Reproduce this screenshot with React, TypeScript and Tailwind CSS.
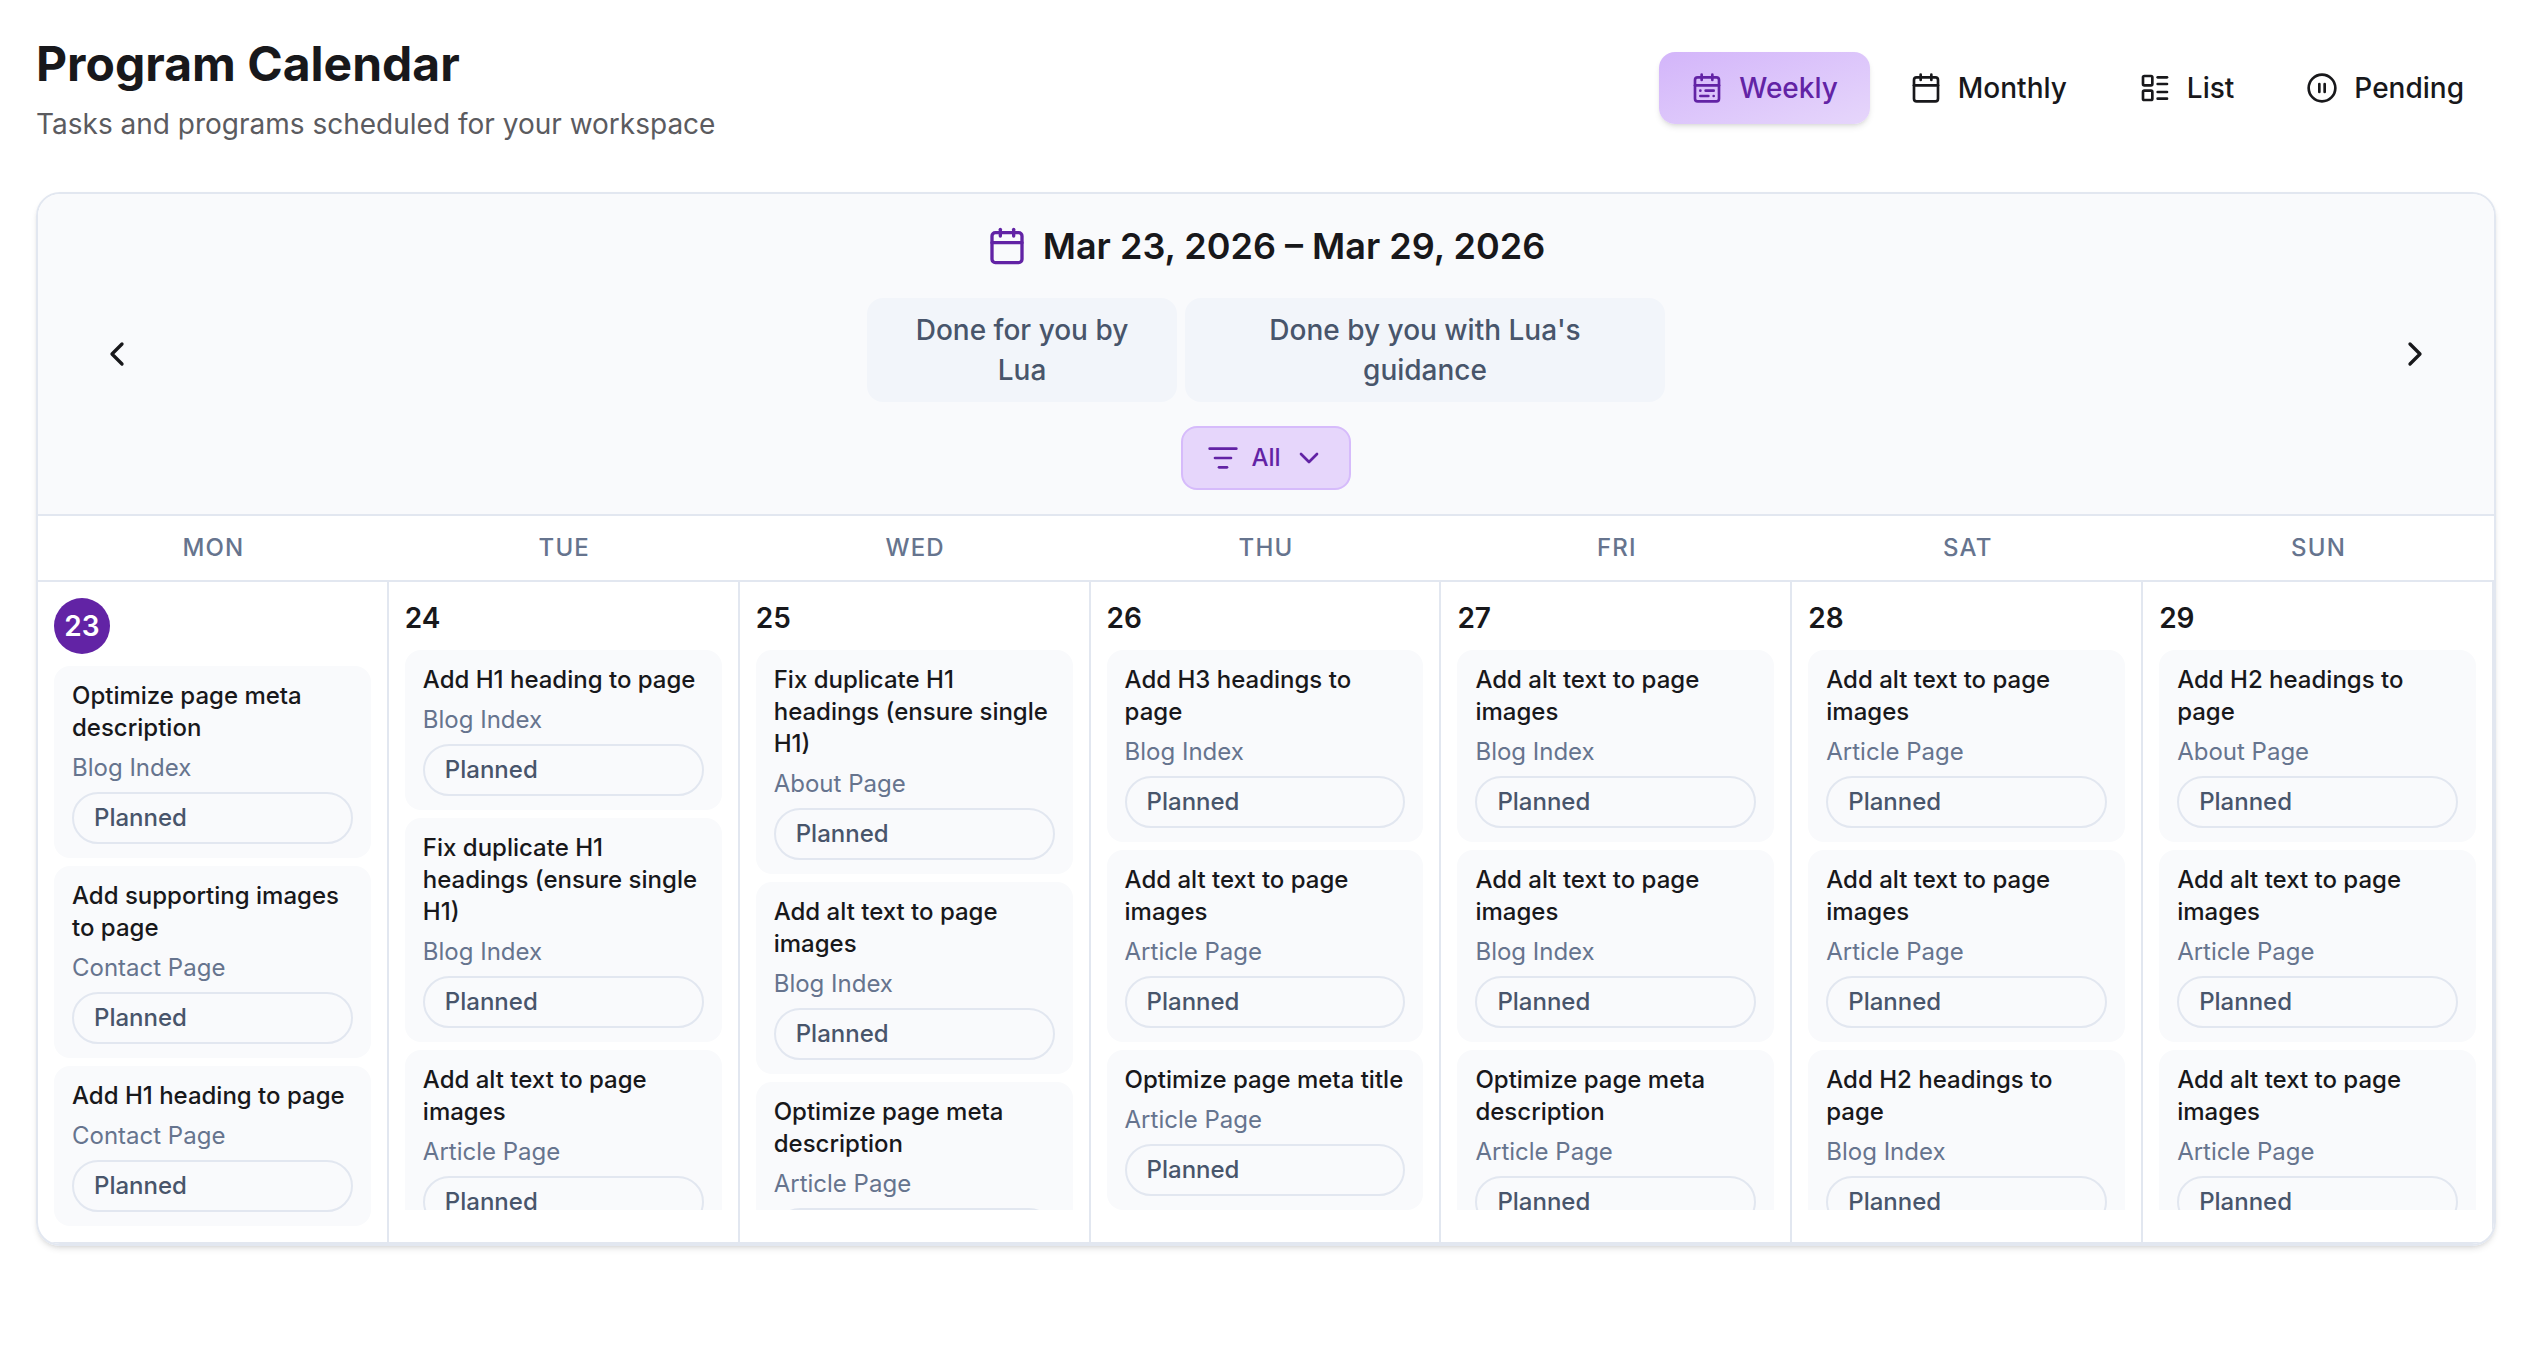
import {
  Calendar,
  CalendarRange,
  ChevronDown,
  ChevronLeft,
  ChevronRight,
  CirclePause,
  LayoutList,
  ListFilter,
} from "lucide-react";

const tabs = [
  { name: "Weekly", icon: CalendarRange, active: true },
  { name: "Monthly", icon: Calendar, active: false },
  { name: "List", icon: LayoutList, active: false },
  { name: "Pending", icon: CirclePause, active: false },
];

const days = [
  {
    label: "Mon",
    date: 23,
    today: true,
    tasks: [
      { title: "Optimize page meta description", page: "Blog Index" },
      { title: "Add supporting images to page", page: "Contact Page" },
      { title: "Add H1 heading to page", page: "Contact Page" },
    ],
  },
  {
    label: "Tue",
    date: 24,
    tasks: [
      { title: "Add H1 heading to page", page: "Blog Index" },
      { title: "Fix duplicate H1 headings (ensure single H1)", page: "Blog Index" },
      { title: "Add alt text to page images", page: "Article Page" },
    ],
  },
  {
    label: "Wed",
    date: 25,
    tasks: [
      { title: "Fix duplicate H1 headings (ensure single H1)", page: "About Page" },
      { title: "Add alt text to page images", page: "Blog Index" },
      { title: "Optimize page meta description", page: "Article Page" },
    ],
  },
  {
    label: "Thu",
    date: 26,
    tasks: [
      { title: "Add H3 headings to page", page: "Blog Index" },
      { title: "Add alt text to page images", page: "Article Page" },
      { title: "Optimize page meta title", page: "Article Page" },
    ],
  },
  {
    label: "Fri",
    date: 27,
    tasks: [
      { title: "Add alt text to page images", page: "Blog Index" },
      { title: "Add alt text to page images", page: "Blog Index" },
      { title: "Optimize page meta description", page: "Article Page" },
    ],
  },
  {
    label: "Sat",
    date: 28,
    tasks: [
      { title: "Add alt text to page images", page: "Article Page" },
      { title: "Add alt text to page images", page: "Article Page" },
      { title: "Add H2 headings to page", page: "Blog Index" },
    ],
  },
  {
    label: "Sun",
    date: 29,
    tasks: [
      { title: "Add H2 headings to page", page: "About Page" },
      { title: "Add alt text to page images", page: "Article Page" },
      { title: "Add alt text to page images", page: "Article Page" },
    ],
  },
];

function TaskCard({ title, page }: { title: string; page: string }) {
  return (
    <article className="shrink-0 rounded-2xl border-2 border-transparent bg-[#f9fafc] px-4 py-3 text-2xl leading-8">
      <h3 className="font-medium text-[#18181b]">{title}</h3>
      <p className="mt-2 text-[#66748e]">{page}</p>
      <div className="mt-2 rounded-full border-2 border-[#e2e7f0] px-5 py-2 font-medium text-[#48556b]">Planned</div>
    </article>
  );
}

export default function App() {
  return (
    <main className="bg-white pt-8 pr-8 pb-28 pl-9 font-['Inter',sans-serif] text-[28px] leading-10 text-[#18181b]">
      <header className="flex items-start justify-between">
        <div>
          <h1 className="text-5xl leading-16 font-bold">Program Calendar</h1>
          <p className="mt-2 text-[#5b5b5f]">Tasks and programs scheduled for your workspace</p>
        </div>
        <nav className="mt-5 flex gap-2">
          {tabs.map(({ name, icon: Icon, active }) => (
            <button
              key={name}
              type="button"
              className={
                active
                  ? "flex items-center gap-4 rounded-2xl bg-linear-to-br from-[#d3b5fa] to-[#e6d6fb] px-8 py-4 font-medium text-[#6223a5] shadow-md"
                  : "flex items-center gap-4 rounded-2xl px-8 py-4 font-medium"
              }
            >
              <Icon className="size-8" />
              {name}
            </button>
          ))}
        </nav>
      </header>

      <section className="mt-12 overflow-hidden rounded-3xl border-2 border-[#e2e7f0] shadow-md">
        <div className="flex items-center justify-between border-b-2 border-[#e2e7f0] bg-[#f9fafc] px-[39px] py-6">
          <button type="button" aria-label="Previous week" className="flex size-20 items-center justify-center">
            <ChevronLeft className="size-10" />
          </button>
          <div className="flex flex-col items-center gap-6">
            <h2 className="flex items-center gap-4 text-4xl leading-14 font-semibold">
              <Calendar className="size-10 text-[#6223a5]" />
              Mar 23, 2026 – Mar 29, 2026
            </h2>
            <div className="flex gap-2 text-center font-medium text-[#48556b]">
              <button type="button" className="w-[310px] rounded-2xl bg-[#f2f5fa] px-12 py-3">
                Done for you by Lua
              </button>
              <button type="button" className="w-[480px] rounded-2xl bg-[#f2f5fa] px-12 py-3">
                Done by you with Lua's guidance
              </button>
            </div>
            <button
              type="button"
              className="flex items-center gap-3 rounded-2xl border-2 border-[#d6bbfb] bg-[#e6d6fb] px-6 py-3 text-2xl leading-9 font-medium text-[#6223a5]"
            >
              <ListFilter className="size-8" />
              All
              <ChevronDown className="size-8" />
            </button>
          </div>
          <button type="button" aria-label="Next week" className="flex size-20 items-center justify-center">
            <ChevronRight className="size-10" />
          </button>
        </div>

        <div className="grid grid-cols-7 border-b-2 border-[#e2e7f0]">
          {days.map((d) => (
            <div key={d.label} className="py-4 text-center text-2xl leading-8 font-medium tracking-wider text-[#66748e] uppercase">
              {d.label}
            </div>
          ))}
        </div>

        <div className="grid grid-cols-7">
          {days.map((d) => (
            <div key={d.label} className="border-r-2 border-b-2 border-[#e2e7f0] p-4">
              {d.today ? (
                <div className="flex size-14 items-center justify-center rounded-full bg-[#6223a5] font-semibold text-white">
                  {d.date}
                </div>
              ) : (
                <div className="font-semibold">{d.date}</div>
              )}
              <div className="mt-3 flex max-h-[560px] flex-col gap-2 overflow-y-auto [scrollbar-width:none]">
                {d.tasks.map((t, i) => (
                  <TaskCard key={i} title={t.title} page={t.page} />
                ))}
              </div>
            </div>
          ))}
        </div>
      </section>
    </main>
  );
}
